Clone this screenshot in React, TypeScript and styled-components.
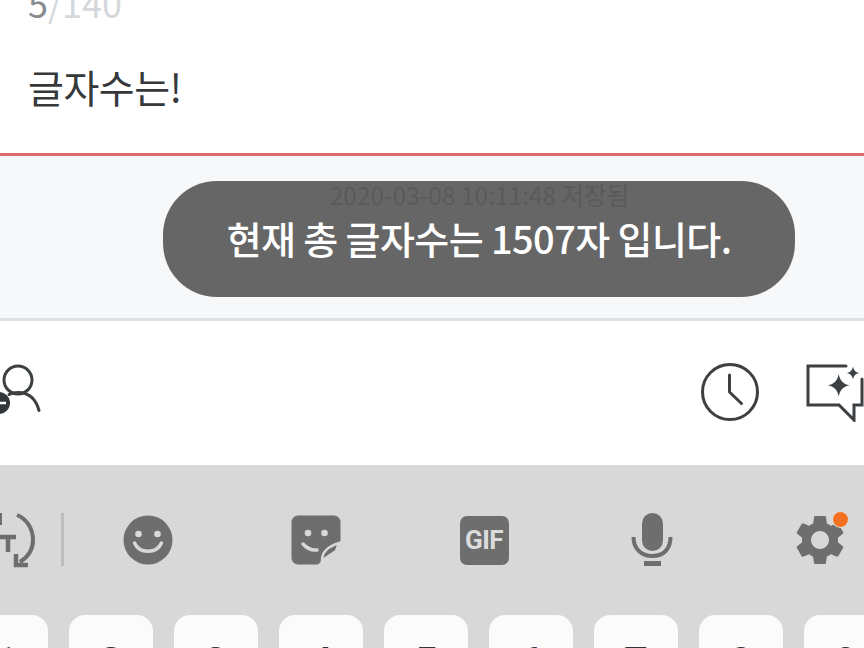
import * as React from "react";
import styled, { createGlobalStyle } from "styled-components";
import { MdSettings } from "react-icons/md";

const GlobalStyle = createGlobalStyle`
  html, body {
    margin: 0;
    padding: 0;
    background: #fff;
  }
  * {
    box-sizing: border-box;
  }
`;

const Screen = styled.div`
  width: 864px;
  height: 648px;
  overflow: hidden;
  display: flex;
  flex-direction: column;
  font-family: "Noto Sans CJK KR", "Noto Sans", sans-serif;
  color: #3a3d40;
`;

const Editor = styled.section`
  height: 156px;
  flex: none;
  padding-left: 28px;
  background: #fff;
  border-bottom: 3px solid #df6c6c;
  box-shadow: 0 1px 3px rgba(120, 120, 130, 0.25);
  position: relative;
`;

const Counter = styled.div`
  margin-top: -20px;
  height: 44px;
  font-size: 36px;
  line-height: 44px;
  font-weight: 400;
  color: #d5d8db;
`;

const CounterCurrent = styled.span`
  color: #888c91;
`;

const Body = styled.div`
  margin-top: 34px;
  font-size: 39px;
  line-height: 56px;
  font-weight: 400;
  letter-spacing: -0.5px;
  color: #36393c;
`;

const Status = styled.section`
  height: 165px;
  flex: none;
  padding: 23px 0 0 95px;
  display: flex;
  justify-content: center;
  background: #f7f8fa;
  border-bottom: 3px solid #dfe0e4;
  position: relative;
`;

const SavedAt = styled.div`
  font-size: 24.5px;
  line-height: 32px;
  color: #646464;
`;

const Toast = styled.div`
  position: absolute;
  left: 163px;
  top: 25px;
  width: 632px;
  height: 116px;
  border-radius: 54px;
  background: rgba(89, 89, 89, 0.92);
  color: #fff;
  display: flex;
  align-items: center;
  justify-content: center;
  font-size: 38px;
  font-weight: 500;
  letter-spacing: -0.6px;
  padding-bottom: 4px;
`;

const Actions = styled.section`
  height: 144px;
  flex: none;
  display: flex;
  align-items: flex-start;
  background: #fff;
  padding-top: 41px;
`;

const ActionsRight = styled.div`
  margin-left: auto;
  display: flex;
  align-items: flex-start;
  gap: 44px;
`;

const Keyboard = styled.section`
  flex: 1;
  background: #d8d8d8;
  display: flex;
  flex-direction: column;
`;

const Toolbar = styled.div`
  height: 150px;
  flex: none;
  display: flex;
  align-items: flex-start;
  padding-top: 47px;
`;

const LeadingTool = styled.div`
  width: 64px;
  height: 56px;
  flex: none;
  display: flex;
  justify-content: space-between;
`;

const Divider = styled.div`
  width: 3px;
  height: 53px;
  margin-top: 1px;
  background: #bdbdbd;
`;

const Tool = styled.div`
  width: 168px;
  height: 56px;
  flex: none;
  display: flex;
  align-items: center;
  justify-content: center;
  position: relative;
`;

const GifBadge = styled.div`
  width: 49px;
  height: 49px;
  border-radius: 7px;
  background: #6e6e6e;
  color: #dcdcdc;
  font-family: Roboto, "Liberation Sans", sans-serif;
  font-weight: 700;
  font-size: 26px;
  letter-spacing: -0.5px;
  display: flex;
  align-items: center;
  justify-content: center;
`;

const NotifyDot = styled.span`
  position: absolute;
  left: 97px;
  top: 0;
  width: 15px;
  height: 15px;
  border-radius: 50%;
  background: #f37021;
  box-shadow: 0 0 0 1px #e2dcd8;
`;

const KeyRow = styled.div`
  display: flex;
  gap: 21px;
  margin-left: -36px;
`;

const Key = styled.div`
  width: 84px;
  height: 90px;
  flex: none;
  border-radius: 16px;
  background: #fbfbfb;
  color: #333;
  font-family: Roboto, "Noto Sans", sans-serif;
  font-size: 42px;
  font-weight: 500;
  line-height: 50px;
  padding-top: 23px;
  text-align: center;
`;

const digits = ["1", "2", "3", "4", "5", "6", "7", "8", "9"];

const UserIcon = () => (
  <svg width="44" height="54" viewBox="0 362 44 54" fill="none">
    <circle cx="18" cy="380" r="14" stroke="#3c4043" strokeWidth="3" />
    <path d="M9 394.5c3-1.5 6-2 9-2 11 0 18 7 21 18" stroke="#3c4043" strokeWidth="3" strokeLinecap="round" />
    <circle cx="-1" cy="403" r="11" fill="#34373a" />
    <path d="M0 403h6" stroke="#fff" strokeWidth="2.5" />
  </svg>
);

const ClockIcon = () => (
  <svg width="60" height="60" viewBox="0 0 60 60" fill="none" stroke="#3c4043" strokeWidth="3">
    <circle cx="30" cy="30" r="27.5" />
    <path d="M29.5 13v17l12 11.5" strokeLinecap="round" strokeLinejoin="round" />
  </svg>
);

const AiIcon = () => (
  <svg width="60" height="60" viewBox="0 0 60 60" fill="none">
    <path
      d="M42 4H4v39h31l15 15V43h8V17"
      stroke="#3c4043"
      strokeWidth="3"
      strokeLinecap="round"
    />
    <path d="M34.700 12c1.300 6.500 4 10 11 11.300-7 1.300-9.700 4.800-11 11.300-1.300-6.500-4-10-11-11.300 7-1.300 9.700-4.800 11-11.300z" fill="#3c4043" />
    <path d="M49 4.500c.8 4 2.500 5.700 6.500 6.500-4 .8-5.700 2.500-6.500 6.500-.8-4-2.500-5.700-6.500-6.500 4-.8 5.700-2.500 6.500-6.500z" fill="#3c4043" />
  </svg>
);

const TranslateIcon = () => (
  <svg width="38" height="56" viewBox="0 512 38 56" fill="none" stroke="#6e6e6e">
    <path d="M17 515c10 4 16 14 16 25 0 9-5 17-13 22" strokeWidth="4" />
    <path d="M16 554v11h12" strokeWidth="4.500" />
    <path d="M0 537h16M8 537v15" strokeWidth="4.500" />
    <path d="M.5 513v12" strokeWidth="3" />
  </svg>
);

const EmojiIcon = () => (
  <svg width="50" height="50" viewBox="0 0 50 50">
    <circle cx="25" cy="25" r="24.500" fill="#6e6e6e" />
    <circle cx="15.500" cy="19" r="3.300" fill="#d8d8d8" />
    <circle cx="34.500" cy="19" r="3.300" fill="#d8d8d8" />
    <path d="M11.500 28c5 11 22 11 27 0" fill="none" stroke="#d8d8d8" strokeWidth="3.500" strokeLinecap="round" />
  </svg>
);

const StickerIcon = () => (
  <svg width="50" height="50" viewBox="0 0 50 50">
    <path d="M7 0.500h36a6.500 6.500 0 0 1 6.500 6.500v20L27 49.500H7A6.500 6.500 0 0 1 .5 43V7A6.500 6.500 0 0 1 7 .5z" fill="#6e6e6e" />
    <circle cx="17" cy="18" r="3.300" fill="#d8d8d8" />
    <circle cx="33.500" cy="18" r="3.300" fill="#d8d8d8" />
    <path d="M12 29c4 4.500 9 6.500 14 6" fill="none" stroke="#d8d8d8" strokeWidth="3.500" strokeLinecap="round" />
    <path d="M31 45c0-8 5-13 17-17l-3 8-9 6z" fill="#6e6e6e" stroke="#d8d8d8" strokeWidth="2.500" />
  </svg>
);

const MicIcon = () => (
  <svg width="44" height="56" viewBox="0 0 44 56" fill="none">
    <rect x="12" y="1" width="21" height="38" rx="10.500" fill="#6e6e6e" />
    <path d="M3.500 25c0 12 8 19 19 19s18-7 18-19" stroke="#6e6e6e" strokeWidth="4" />
    <path d="M14 51.500h17" stroke="#6e6e6e" strokeWidth="5" />
  </svg>
);

export default function App() {
  return (
    <Screen>
      <GlobalStyle />
      <Editor>
        <Counter>
          <CounterCurrent>5</CounterCurrent>/140
        </Counter>
        <Body>글자수는!</Body>
      </Editor>
      <Status>
        <SavedAt>2020-03-08 10:11:48 저장됨</SavedAt>
        <Toast>현재 총 글자수는 1507자 입니다.</Toast>
      </Status>
      <Actions>
        <UserIcon />
        <ActionsRight>
          <ClockIcon />
          <AiIcon />
        </ActionsRight>
      </Actions>
      <Keyboard>
        <Toolbar>
          <LeadingTool>
            <TranslateIcon />
            <Divider />
          </LeadingTool>
          <Tool><EmojiIcon /></Tool>
          <Tool><StickerIcon /></Tool>
          <Tool><GifBadge>GIF</GifBadge></Tool>
          <Tool><MicIcon /></Tool>
          <Tool>
            <MdSettings size={60} color="#6e6e6e" />
            <NotifyDot />
          </Tool>
        </Toolbar>
        <KeyRow>
          {digits.map((d) => (
            <Key key={d}>{d}</Key>
          ))}
        </KeyRow>
      </Keyboard>
    </Screen>
  );
}
